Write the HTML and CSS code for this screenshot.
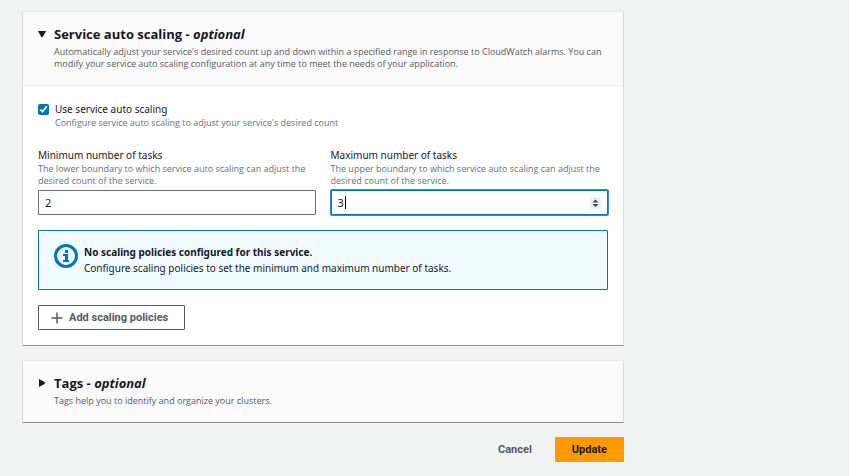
FILE: index.html
```html
<!DOCTYPE html>
<html lang="en">
<head>
<meta charset="utf-8">
<title>Update service</title>
<link rel="stylesheet" href="styles.css">
</head>
<body>
<form class="page">
  <section class="card">
    <header class="card-header">
      <button class="toggle" type="button" aria-expanded="true" aria-label="Collapse service auto scaling">
        <svg width="8" height="8" viewBox="0 0 8 8"><path d="M0 1h8L5 6.500Q4 8 3 6.500z" fill="#16191f"/></svg>
      </button>
      <div class="heading">
        <h2>Service auto scaling - <em>optional</em></h2>
        <p class="hint">Automatically adjust your service's desired count up and down within a specified range in response to CloudWatch alarms. You can modify your service auto scaling configuration at any time to meet the needs of your application.</p>
      </div>
    </header>
    <div class="card-body">
      <div class="check">
        <input type="checkbox" id="auto" checked aria-describedby="auto-hint">
        <div>
          <label for="auto">Use service auto scaling</label>
          <p class="hint light" id="auto-hint">Configure service auto scaling to adjust your service's desired count</p>
        </div>
      </div>
      <div class="fields">
        <div class="field">
          <label for="min">Minimum number of tasks</label>
          <p class="hint light">The lower boundary to which service auto scaling can adjust the desired count of the service.</p>
          <div class="control"><input type="number" id="min" value="2"></div>
        </div>
        <div class="field">
          <label for="max">Maximum number of tasks</label>
          <p class="hint light">The upper boundary to which service auto scaling can adjust the desired count of the service.</p>
          <div class="control active">
            <input type="number" id="max" value="3">
            <span class="caret"></span>
            <svg class="spinner" width="11" height="12" viewBox="0 0 11 12"><path d="M0 0h11v12H0z" fill="#efefef"/><path d="M5.500 2.500L8.500 5.500H2.500zM5.500 10L8.500 7H2.500z" fill="#444"/></svg>
          </div>
        </div>
      </div>
      <div class="alert">
        <svg width="24" height="24" viewBox="0 0 24 24"><circle cx="12" cy="12" r="10.500" fill="none" stroke="#0073bb" stroke-width="3"/><path d="M11 6h3v3h-3zM9 10h5v6h1v2H9v-2h2v-4H9z" fill="#0073bb"/></svg>
        <div>
          <strong>No scaling policies configured for this service.</strong>
          <p>Configure scaling policies to set the minimum and maximum number of tasks.</p>
        </div>
      </div>
      <button class="button outline" type="button">
        <svg width="12" height="12" viewBox="0 0 12 12"><path d="M6 .5v11M.5 6h11" stroke="#545b64" stroke-width="1.500"/></svg>
        Add scaling policies
      </button>
    </div>
  </section>
  <section class="card">
    <header class="card-header">
      <button class="toggle" type="button" aria-expanded="false" aria-label="Expand tags">
        <svg width="8" height="8" viewBox="0 0 8 8"><path d="M1 0v8L6.500 5Q8 4 6.500 3z" fill="#16191f"/></svg>
      </button>
      <div class="heading">
        <h2>Tags - <em>optional</em></h2>
        <p class="hint">Tags help you to identify and organize your clusters.</p>
      </div>
    </header>
  </section>
  <footer class="actions">
    <button class="button link" type="button">Cancel</button>
    <button class="button primary" type="submit">Update</button>
  </footer>
</form>
</body>
</html>
```
FILE: styles.css
```css
* { box-sizing: border-box; }
body {
  margin: 0;
  background: #f1f3f3;
  color: #16191f;
  font: 10px/16px "Noto Sans", "Open Sans", sans-serif;
}
h2, p { margin: 0; }
button, input { font: inherit; color: inherit; }
.page {
  max-width: 646px;
  padding: 11px 22px;
  display: flex;
  flex-direction: column;
  gap: 14px;
}
.card {
  background: #fff;
  border: 1px solid #d5dbdb;
  border-top-color: #eaeded;
  border-bottom-color: #879596;
}
.card-header {
  display: flex;
  gap: 8px;
  padding: 13px 15px 15px;
  background: #fafafa;
}
.toggle {
  display: flex;
  align-items: center;
  width: 8px;
  height: 18px;
  padding: 0;
  border: 0;
  background: none;
}
.heading { flex: 1; }
h2 { margin-bottom: 3px; font: 700 13px/18px "Open Sans", "Noto Sans", sans-serif; }
.hint { font: 9px/12px "Open Sans", "Noto Sans", sans-serif; color: #545b64; }
.light { color: #687078; }
label { display: block; }
.card-body { padding: 15px; border-top: 1px solid #eaeded; }
.check { display: flex; gap: 6px; }
.check input {
  width: 11px;
  height: 11px;
  margin: 3px 0;
  accent-color: #0073bb;
}
.fields {
  display: grid;
  grid-template-columns: 1fr 1fr;
  gap: 15px;
  margin-top: 18px;
}
.control { position: relative; margin-top: 3px; }
.control input {
  display: block;
  width: 100%;
  height: 25px;
  padding: 0 6px;
  border: 1px solid #687078;
  border-radius: 1px;
  background: #fff;
  font-size: 11px;
  outline: 0;
  appearance: textfield;
}
.control input::-webkit-inner-spin-button { appearance: none; }
.control.active input { border-color: #0073bb; box-shadow: 0 0 0 1px #2e8fd0; }
.caret {
  position: absolute;
  left: 14px;
  top: 6px;
  width: 1px;
  height: 13px;
  background: #000;
}
.spinner { position: absolute; right: 7px; top: 7px; }
.alert {
  display: flex;
  align-items: flex-start;
  gap: 6px;
  margin-top: 15px;
  padding: 13px 15px;
  border: 1px solid #0073bb;
  border-radius: 1px;
  background: #f1faff;
}
.button {
  display: inline-flex;
  align-items: center;
  gap: 6px;
  height: 25px;
  padding: 0 16px;
  border: 1px solid transparent;
  border-radius: 1px;
  background: none;
  font: 700 11px/16px Roboto, "Open Sans", sans-serif;
  color: #545b64;
}
.outline { margin-top: 15px; padding: 0 16px 0 12px; border-color: #545b64; background: #fff; }
.actions { display: flex; justify-content: flex-end; gap: 6px; }
.primary { background: #ff9900; color: #16191f; }
```
